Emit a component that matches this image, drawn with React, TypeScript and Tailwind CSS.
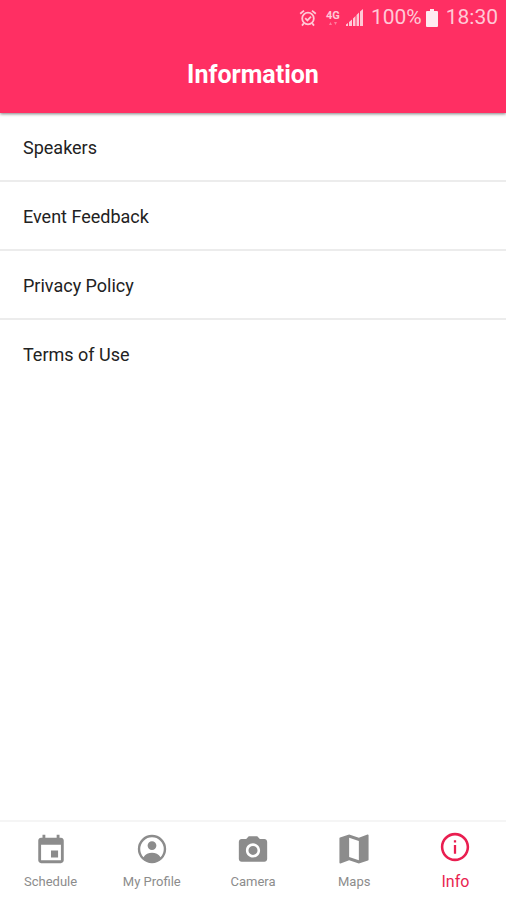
import React, { useState } from "react";
import clsx from "clsx";

type TabType = {
  id: string;
  label: string;
  viewBox: string;
  path: string;
};

const menuItems = ["Speakers", "Event Feedback", "Privacy Policy", "Terms of Use"];

const tabs: TabType[] = [
  {
    id: "schedule",
    label: "Schedule",
    viewBox: "0 -1 24 24",
    path: "M17 12h-5v5h5v-5zM16 1v2H8V1H6v2H5c-1.11 0-1.99.9-1.99 2L3 19c0 1.1.89 2 2 2h14c1.1 0 2-.9 2-2V5c0-1.1-.9-2-2-2h-1V1h-2zm3 18H5V8h14v11z",
  },
  {
    id: "profile",
    label: "My Profile",
    viewBox: "0 0 24 24",
    path: "M12 2a10 10 0 1 0 0 20 10 10 0 0 0 0-20zM6 17.8A8.300 8.300 0 1 1 18 17.800C16.900 15.700 14.200 14.700 12 14.700s-4.900 1-6 3.100zM12 6.500a3.100 3.100 0 1 0 0 6.200 3.100 3.100 0 0 0 0-6.200z",
  },
  {
    id: "camera",
    label: "Camera",
    viewBox: "0 -1 24 24",
    path: "M12 8.8a3.2 3.2 0 1 0 0 6.4 3.2 3.2 0 0 0 0-6.4zM9 2L7.17 4H4c-1.1 0-2 .9-2 2v12c0 1.1.9 2 2 2h16c1.1 0 2-.9 2-2V6c0-1.1-.9-2-2-2h-3.17L15 2H9zm3 15c-2.76 0-5-2.24-5-5s2.24-5 5-5 5 2.24 5 5-2.24 5-5 5z",
  },
  {
    id: "maps",
    label: "Maps",
    viewBox: "1.5 1.5 21 21",
    path: "M20.5 3l-.16.03L15 5.1 9 3 3.36 4.9c-.21.07-.36.25-.36.48V20.5c0 .28.22.5.5.5l.16-.03L9 18.9l6 2.1 5.64-1.9c.21-.07.36-.25.36-.48V3.5c0-.28-.22-.5-.5-.5zM15 19l-6-2.11V5l6 2.11V19z",
  },
  {
    id: "info",
    label: "Info",
    viewBox: "0 0 24 24",
    path: "M11.2 16.8h1.6V10.6h-1.6v6.2zM12 2C6.48 2 2 6.48 2 12s4.48 10 10 10 10-4.48 10-10S17.52 2 12 2zm0 18.2c-4.53 0-8.2-3.67-8.2-8.2S7.47 3.8 12 3.8s8.2 3.67 8.2 8.2-3.67 8.2-8.2 8.2zM11.2 8.9h1.6V7.3h-1.6v1.6z",
  },
];

function StatusBar() {
  return (
    <div className="flex h-9 items-center justify-end gap-1 px-2 text-[21px] text-[#ffc9d6]">
      <svg width="18" height="18" viewBox="0 0 18 18" fill="none" stroke="currentColor" strokeWidth="1.8">
        <circle cx="9" cy="9.5" r="5.8" />
        <path d="M1.2 4.8L5 1.6M16.8 4.8L13 1.6M4.8 14.2L3 16.6M13.2 14.2L15 16.6M6.2 9.2l2.2 2.2 3.6-3.8" />
      </svg>
      <div className="flex w-5 flex-col items-center justify-center pl-1">
        <span className="text-[11px] leading-[11px] font-bold">4G</span>
        <svg width="10" height="5" viewBox="0 0 10 5" fill="currentColor" opacity="0.5">
          <path d="M1 4l1.5-3L4 4zM6 1h3L7.5 4z" />
        </svg>
      </div>
      <svg width="18" height="18" viewBox="0 0 18 18" fill="currentColor">
        <path d="M1 15.500L3 14v3H1zM4 13l3-2.500V17H4zM8 9.500L10.500 7v10H8zM11.500 6L14 3.500V17h-2.500zM15 2.500L18 0v17h-3z" />
      </svg>
      <span className="pl-1">100%</span>
      <svg width="12" height="18" viewBox="0 0 12 18" className="text-[#ffeaf0]" fill="currentColor">
        <path d="M4 0h4v2h3a1 1 0 0 1 1 1v14a1 1 0 0 1-1 1H1a1 1 0 0 1-1-1V3a1 1 0 0 1 1-1h3z" />
      </svg>
      <span className="pl-1">18:30</span>
    </div>
  );
}

function App() {
  const [active, setActive] = useState("info");

  return (
    <div className="flex min-h-screen flex-col bg-white font-['Roboto',sans-serif]">
      <header className="bg-[#ff2f63] shadow-[0_1px_3px_rgba(0,0,0,0.5)]">
        <StatusBar />
        <h1 className="py-5 text-center text-[25px] leading-[37px] font-bold text-white">Information</h1>
      </header>
      <main className="flex-1">
        <ul className="divide-y-2 divide-[#ececec]">
          {menuItems.map((item) => (
            <li key={item}>
              <a href="#" className="block px-[23px] pt-[21px] pb-[19px] text-lg leading-[27px] text-[#222222]">{item}</a>
            </li>
          ))}
        </ul>
      </main>
      <nav className="grid grid-cols-5 border-t-2 border-[#f5f5f5]">
        {tabs.map((tab) => (
          <button
            key={tab.id}
            onClick={() => setActive(tab.id)}
            className={clsx(
              "flex flex-col items-center pb-1.5",
              active === tab.id ? "pt-2 text-[#e91e50]" : "pt-2.5 text-[#8c8c8c]"
            )}
          >
            <svg width="34" height="34" viewBox={tab.viewBox} fill="currentColor" fillRule="evenodd">
              <path d={tab.path} />
            </svg>
            <span className={clsx("leading-6", active === tab.id ? "pt-1.5 text-base" : "pt-1 text-[13px]")}>{tab.label}</span>
          </button>
        ))}
      </nav>
    </div>
  );
}

export default App;
